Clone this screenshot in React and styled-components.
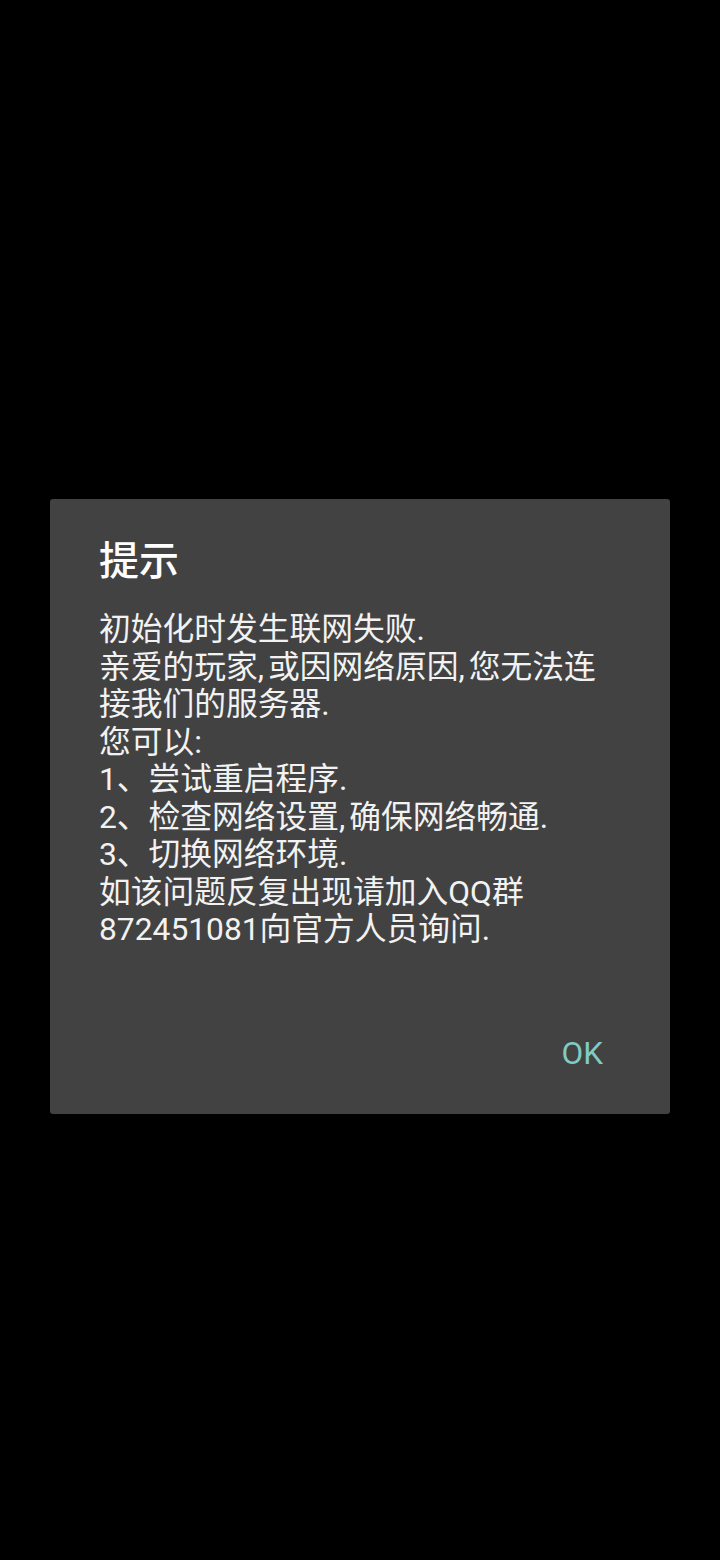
import React from 'react';
import styled, { createGlobalStyle } from 'styled-components';

const GlobalStyle = createGlobalStyle`
  html, body {
    margin: 0;
    padding: 0;
    background: #000;
  }
  body {
    font-family: Roboto, "Noto Sans CJK SC", sans-serif;
  }
`;

const Screen = styled.div`
  width: 720px;
  height: 1560px;
  background: #000;
  display: flex;
  justify-content: center;
  padding-top: 499px;
  box-sizing: border-box;
`;

const Dialog = styled.section`
  width: 620px;
  height: 615px;
  box-sizing: border-box;
  background: #424242;
  border-radius: 3px;
  padding: 41px 49px 31px 49px;
  display: flex;
  flex-direction: column;
  box-shadow: 0 4px 14px rgba(0, 0, 0, 0.6);
`;

const Title = styled.h2`
  margin: 0;
  font-size: 40px;
  line-height: 44px;
  font-weight: 500;
  color: #fff;
`;

const Message = styled.div`
  margin-top: 27px;
  font-size: 31.75px;
  line-height: 37.5px;
  color: #f2f2f2;
  white-space: nowrap;
`;

const Line = styled.div``;

// the device font gives the ascii comma a wider advance
const Comma = styled.span`
  margin-right: 4px;
`;

const Footer = styled.div`
  margin-top: auto;
  display: flex;
  justify-content: flex-end;
  padding-right: 2px;
`;

const TextButton = styled.button`
  height: 60px;
  padding: 0 16px;
  border: none;
  background: transparent;
  color: #80cbc4;
  font-family: Roboto, sans-serif;
  font-size: 31.5px;
  font-weight: 400;
  cursor: pointer;
`;

const lines = [
  '初始化时发生联网失败.',
  '亲爱的玩家,或因网络原因,您无法连',
  '接我们的服务器.',
  '您可以:',
  '1、尝试重启程序.',
  '2、检查网络设置,确保网络畅通.',
  '3、切换网络环境.',
  '如该问题反复出现请加入QQ群',
  '872451081向官方人员询问.',
];

const renderLine = text =>
  text.split(',').map((part, i, arr) => (
    <React.Fragment key={i}>
      {part}
      {i < arr.length - 1 && <Comma>,</Comma>}
    </React.Fragment>
  ));

const App = () => (
  <>
    <GlobalStyle />
    <Screen>
      <Dialog>
        <Title>提示</Title>
        <Message>
          {lines.map((l, i) => (
            <Line key={i}>{renderLine(l)}</Line>
          ))}
        </Message>
        <Footer>
          <TextButton>OK</TextButton>
        </Footer>
      </Dialog>
    </Screen>
  </>
);

export default App;
